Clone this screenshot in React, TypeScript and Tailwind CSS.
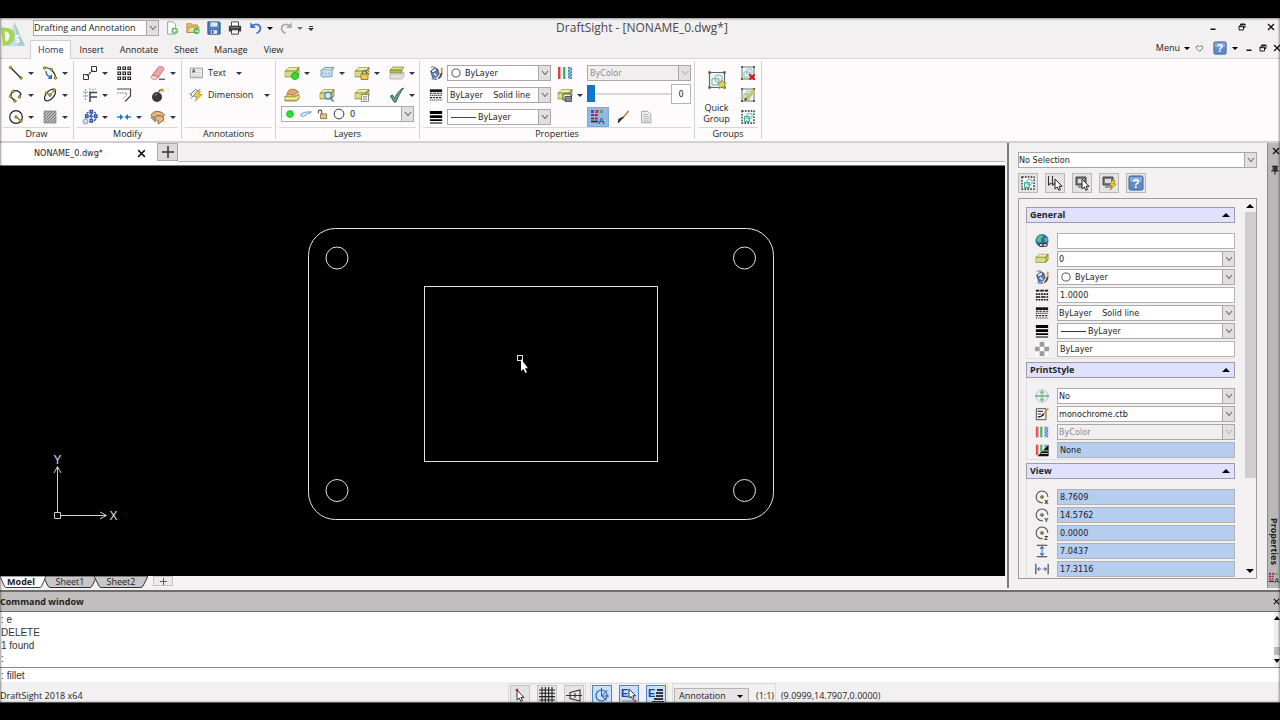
import type { ReactNode } from 'react';

const OPEN = "font-['Open_Sans',sans-serif]";
const FIELD = "font-['DejaVu_Sans_Condensed','DejaVu_Sans',sans-serif]";

const layerStack = (
  <g>
    <path d="M1 6 5 2.5h10L12 6z" fill="#eef09a" stroke="#7d7f3a" strokeWidth=".6" />
    <path d="M1 6h11v6H1z" fill="#c9cc62" stroke="#7d7f3a" strokeWidth=".6" />
    <path d="M12 6l3-3.5V9l-3 3z" fill="#98993f" stroke="#6d6f30" strokeWidth=".6" />
    <path d="M1 8h11l3-3M1 10h11l3-3" fill="none" stroke="#f3f4b8" strokeWidth=".8" />
  </g>
);
const node = (x: number, y: number) => (
  <circle cx={x} cy={y} r="1.3" fill="#d6cf3c" stroke="#55501c" strokeWidth=".7" />
);
const colorBars = (
  <g>
    <path d="M1 2h3v12H1z" fill="#d8434a" />
    <path d="M3 2h1.3v12H3z" fill="#f3a7a2" />
    <path d="M6 2h3v12H6z" fill="#36b667" />
    <path d="M8 2h1.2v12H8z" fill="#aee5bd" />
    <path d="M11 2h4v12h-4z" fill="#4b7fca" />
    <path d="M11 5l4-3M11 8l4-3M11 11l4-3M11 14l4-3" stroke="#d5e4f8" strokeWidth="1" />
  </g>
);
const groupBox = (
  <g>
    <path d="M2 2h12v12H2z" fill="#f1f6f3" stroke="#666" strokeWidth=".9" />
    <circle cx="9.200" cy="6.800" r="3" fill="#e4f1ff" stroke="#7eabd8" strokeWidth=".8" />
    <path d="M4 7h5.500v5H4z" fill="none" stroke="#67b592" strokeWidth=".8" />
    <path d="M1 1h2v2H1zM13 1h2v2h-2zM1 13h2v2H1zM13 13h2v2h-2z" fill="#5c6140" />
  </g>
);
const dashedGroup = (
  <g>
    <path d="M2 2h12v12H2z" fill="#eefaf6" stroke="#222" strokeWidth="1.3" strokeDasharray="1.6 1.3" />
    <path d="M4.5 7.5h5v5h-5z" fill="#bdebd9" stroke="#3cae8a" />
    <circle cx="9.5" cy="7" r="2.8" fill="none" stroke="#5aa9c8" strokeWidth=".9" />
  </g>
);
const paint = (
  <g>
    <path d="M2 6 10 3.500l1.500 5L9 12.500l-5 .5z" fill="#5f86c0" stroke="#2b3f66" strokeWidth=".9" />
    <ellipse cx="5.800" cy="5.200" rx="3.600" ry="2" transform="rotate(-28 5.800 5.200)" fill="#dbe6f4" stroke="#26365a" strokeWidth=".9" />
    <path d="M2 2c2-1.500 5-1.500 7 2" fill="none" stroke="#26365a" strokeWidth=".8" />
    <path d="m5.500 8 3 3.500" stroke="#dbe6f4" strokeWidth="1.600" />
    <path d="M14.500 2v6.500" stroke="#d49a45" strokeWidth="2" />
    <path d="M13.500 8h2l-1 3.500c-1 2.500-3 3.500-5 3.500 2-2 2.500-4 4-7z" fill="#5d4420" />
    <path d="M3 14.300c2 .8 4 .8 6 .3" stroke="#3a63ab" strokeWidth="1.500" fill="none" />
  </g>
);
const monitor = (
  <g>
    <path d="M2 2h10v8H2z" fill="#7b7b7b" stroke="#333" strokeWidth=".9" />
    <path d="M4 4h6v4H4z" fill="#d7dfe7" />
    <path d="M4 11h6v2H4z" fill="#999" />
  </g>
);
const arrowCursor = <path d="M8 4v10l2.3-2 1.5 3.3 1.7-.8L12 11.300h3z" fill="#fff" stroke="#222" strokeWidth="1" />;
const viewRing = (
  <g>
    <path d="M9 14.500A6.700 6.700 0 1 1 14.700 8" fill="none" stroke="#555" strokeWidth="1.300" />
    <circle cx="8" cy="8" r="1.700" fill="#8a9140" stroke="#444a22" strokeWidth=".6" />
  </g>
);
const letter = (t: string) => (
  <text x="10.500" y="15.500" fontSize="7" fontWeight="700" fontFamily="Liberation Sans, sans-serif" fill="#111">{t}</text>
);

const glyphs: Record<string, ReactNode> = {
  line: <g><path d="M2.500 2.500 13 13" stroke="#222" strokeWidth="1.200" />{node(2.5, 2.5)}{node(13, 13)}</g>,
  arc: <g><path d="M2 3c6-1.500 11 4 12 10" fill="none" stroke="#222" strokeWidth="1.200" /><path d="M4 6c0 3 1 5 4 5.500" fill="none" stroke="#2f6fc4" strokeWidth="1.500" /><path d="M10 9v5H5.500z" fill="#2f6fc4" />{node(2.5, 3)}{node(9.5, 4.500)}{node(13.5, 13)}</g>,
  polyline: <g><path d="M7 14 2.500 9.500C3 4 9 1 13 7L11 10" fill="none" stroke="#222" strokeWidth="1.200" />{node(7, 14)}{node(2.5, 9.500)}{node(11.5, 10)}{node(5, 4.500)}</g>,
  ellipse: <g><ellipse cx="8" cy="8" rx="7" ry="3.800" transform="rotate(-48 8 8)" fill="none" stroke="#222" strokeWidth="1.200" /><path d="m8 8 4.500-5M8 8 4.500 6" stroke="#444" strokeWidth=".8" />{node(8, 8)}{node(4.500, 6)}{node(12.500, 3)}</g>,
  circle: <g><circle cx="8" cy="8" r="6.300" fill="none" stroke="#222" strokeWidth="1.200" /><path d="m8 8 5 4" stroke="#222" />{node(8, 8)}{node(13, 12)}</g>,
  hatch: <g><path d="M2 2h12v12H2z" fill="#b9b9b9" stroke="#888" strokeWidth=".8" /><path d="M2 5l3-3M2 8l6-6M2 11l9-9M2 14 14 2M5 14l9-9M8 14l6-6M11 14l3-3" stroke="#666" strokeWidth=".8" /></g>,
  move: <g><path d="M1.500 9.500h5v5h-5zM9.500 1.500h5v5h-5z" fill="#fff" stroke="#333" /><path d="m5 11 6-6" stroke="#2c46b8" strokeWidth="1.500" strokeDasharray="2.200 .8" /></g>,
  pattern: <path d="M2 2h2.500v2.500H2zM7 2h2.500v2.500H7zM12 2h2.500v2.500H12zM2 7h2.500v2.500H2zM7 7h2.500v2.500H7zM12 7h2.500v2.500H12zM2 12h2.500v2.500H2zM7 12h2.500v2.500H7zM12 12h2.500v2.500H12z" fill="#fff" stroke="#222" strokeWidth="1.200" />,
  eraser: <g><path d="M2.500 10 8.500 2c1-1 6 0 5.500 2L8.500 12z" fill="#f2a7a7" stroke="#b66a6c" strokeWidth=".8" /><path d="m2.500 10 6 2-1.500 2c-1.500 1-6 0-6-1.500z" fill="#f9d9d5" stroke="#b66a6c" strokeWidth=".8" /><path d="M9 14.300h6" stroke="#666" strokeWidth="1.500" /></g>,
  trim: <g><path d="M1 5h6M1 9h5M3.500 2v12M8 1v4M10 3l4-1" stroke="#6b9edb" strokeDasharray="2 1" /><path d="M8 15V5.500h7M8 10h7" fill="none" stroke="#444" strokeWidth="1.500" /></g>,
  offset: <g><path d="M1 2h13.500v7L9 14.500" fill="none" stroke="#444" strokeWidth="1.200" /><path d="M1 6h9.500v2l-4 4" fill="none" stroke="#777" strokeDasharray="1.500 1" /></g>,
  explode: <g><circle cx="7" cy="10" r="5" fill="#393939" /><path d="M5 8.500a2 2 0 0 1 2-1.500" stroke="#aaa" fill="none" /><path d="M9 5c0-2 2-2.500 3-2" stroke="#444" strokeWidth="1.200" fill="none" /><path d="m12 .5.8 1.700 2 .3-1.500 1.200.3 1.800L12 4.500l-1.500.5.500-1.500z" fill="#f09a2a" /></g>,
  copyRing: <g><path d="M8 1.500h2.500V4H8zM3.500 6H6v2.500H3.500zM12.500 6H15v2.500h-2.500zM8 10.500h2.500V13H8z" fill="#fff" stroke="#2b4c9b" strokeWidth="1.300" /><path d="M9.200 5v4.500M7 7.300h4.500" stroke="#2f6fc4" strokeWidth="1.600" /><path d="M4.500 4.500 6.500 3M12 3l2 1.500M12 12l2-2" stroke="#2b4c9b" strokeWidth="1.200" /><circle cx="3.500" cy="12.500" r="2.500" fill="#d9dde4" stroke="#8d97aa" /></g>,
  split: <path d="M1 7.300h3V5l3.500 3L4 11V8.800H1zM15 7.300h-3V5L8.500 8l3.500 3V8.800h3z" fill="#2b78c9" />,
  edit: <g><path d="M1 6.500C3 1 11 1 14.500 6L12 9l-7 .5z" fill="#dcb485" stroke="#75532a" strokeWidth=".8" /><path d="M5 8c2-2 6-1.500 8 0l1 3-3 2-3 2 .5-3-3.500-1.500z" fill="#e9b878" stroke="#75532a" strokeWidth=".8" /><path d="m1 8 5 5" stroke="#777" strokeWidth="1.300" /></g>,
  note: <g><path d="M1.500 2.500h14v11h-14z" fill="#f3f4f5" stroke="#8a8d90" /><path d="M9 5h5M9 7.500h5M3 10h11M3 12h11" stroke="#bbb" strokeWidth=".8" /><text x="3" y="8" fontSize="6" fontWeight="700" fontFamily="Liberation Sans" fill="#222">A</text></g>,
  dimension: <g><path d="M1 8 8 1M2 12 13 1M1 6l3 4M7 1l3 3" stroke="#4a7bc4" strokeWidth="1.100" /><path d="m9 3 4 1-2 3 4 .5L7 15l2-5-4-.5z" fill="#f2cf3a" stroke="#8d7417" strokeWidth=".7" /></g>,
  stack: layerStack,
  layerOn: <g>{layerStack}<circle cx="11" cy="11" r="3.600" fill="#2fe030" stroke="#189a20" strokeWidth=".7" /></g>,
  layerFreeze: <g><path d="M2 5l4-2.500h9L13 6v6l-2-1-2 1.500-2-1.500-2 1.500L2 11z" fill="#c9e4f6" stroke="#5e93c4" strokeWidth=".9" /><path d="M4 7v3M7 7.500v2.500M10 7v3" stroke="#8fbce0" strokeWidth="1.200" /><path d="M2 5h10l3-2" stroke="#a9b872" strokeWidth="1.200" fill="none" /></g>,
  layerLock: <g>{layerStack}<path d="M8.500 9V7.500a2 2 0 0 1 4 0V9" fill="none" stroke="#666" strokeWidth="1.200" /><path d="M7 9h7v5.500H7z" fill="#f2c64b" stroke="#8c6a16" strokeWidth=".8" /></g>,
  layerSheet: <g><path d="M1 5 4 2h11l-2 3z" fill="#dfe28a" stroke="#7d7f3a" strokeWidth=".7" /><path d="M1 5h12v3H1z" fill="#b7ba51" stroke="#7d7f3a" strokeWidth=".7" /><path d="M1 9h12l2-2v4l-2 3H1z" fill="#e1e1e1" stroke="#a7a7a7" strokeWidth=".7" /></g>,
  layerHand: <g><path d="M1 9h10l4-2v5l-3 2H1z" fill="#d3cf6c" stroke="#7d7436" strokeWidth=".8" /><path d="M3 7c1-4 4-6 9-4l2.500 2-5 3-4-1-2 1z" fill="#e9a46a" stroke="#9c5a2c" strokeWidth=".8" /><path d="M1 11.500h11l3-2" stroke="#fff6b0" fill="none" /></g>,
  layerFind: <g>{layerStack}<circle cx="9" cy="8.500" r="3.300" fill="#cfe6fa" stroke="#4f7fae" strokeWidth="1.200" /><path d="m11.500 11 3 3.500" stroke="#4f7fae" strokeWidth="1.800" /></g>,
  layerPage: <g>{layerStack}<path d="M7.500 7.500h7v7h-7z" fill="#f5f5f5" stroke="#777" strokeWidth=".8" /><path d="M9 9.500h4M9 11h4M9 12.500h4" stroke="#888" strokeWidth=".7" /></g>,
  check: <path d="m1.500 9 2-1 2 3.500C8 6 11 2.500 14.500 1 11.500 5 9 9.500 7 15H5z" fill="#6fa98a" stroke="#27503d" strokeWidth=".9" />,
  paint,
  linestyle: <g><path d="M1 1.500h14v3H1z" fill="#111" /><path d="M1 6h14" stroke="#222" strokeWidth="1.400" strokeDasharray="3 1" /><path d="M1 8.500h14M1 13.700h14" stroke="#222" strokeWidth="1.400" strokeDasharray="1.200 1" /><path d="M1 11h14" stroke="#222" strokeWidth="1.400" strokeDasharray="2.500 1" /></g>,
  dashes: <g><path d="M1 3h14" stroke="#111" strokeWidth="2" strokeDasharray="4 1" /><path d="M1 7h14M1 13.500h14" stroke="#111" strokeWidth="1.800" strokeDasharray="2 1" /><path d="M1 10.300h14" stroke="#111" strokeWidth="1.800" strokeDasharray="5 1" /></g>,
  weight: <path d="M1 1h14v3.500H1zM1 6h14v3H1zM1 10.500h14v2.200H1zM1 14.200h14v1.200H1z" fill="#000" />,
  checker: <g><path d="M0 0h16v16H0z" fill="#fafafa" /><path d="M5.300 0h5.400v5.300H5.300zM0 5.300h5.300v5.400H0zM10.700 5.300H16v5.400h-5.300zM5.300 10.700h5.400V16H5.300z" fill="#9b9b9b" /></g>,
  bars: colorBars,
  layerPrint: <g>{layerStack}<path d="M6 7h8v6H6z" fill="#eee" stroke="#444" strokeWidth=".9" /><path d="M8 9.500h6.500v5H8z" fill="#888" stroke="#333" strokeWidth=".7" /></g>,
  brush: <g><path d="M14.500 1 7.500 9.500" stroke="#b88b4b" strokeWidth="1.800" /><path d="m8.500 8-6 6.500 1-4z" fill="#3a2d1c" stroke="#3a2d1c" strokeWidth="1.200" /></g>,
  page: <g><path d="M3 1.500h7l3.500 3.500v9.500H3z" fill="#f2f2f2" stroke="#999" /><path d="M5 5h5M5 7.500h6.500M5 10h6.500M5 12.500h6.500" stroke="#a5a5a5" /></g>,
  match: <g><path d="M1 1h3v3H1z" fill="#5548c8" /><path d="M5.500 1h3v3h-3z" fill="#d02b3b" /><path d="M10 1h3v3h-3z" fill="#4dae57" /><path d="M1 6h7M1 9.500h7" stroke="#a3273d" strokeWidth="1.800" strokeDasharray="3 .7" /><path d="M1 12.500h7" stroke="#333" strokeWidth="1.800" /><text x="8.500" y="15" fontSize="9" fontFamily="Liberation Sans" fill="#111">A</text></g>,
  quickGroup: <g>{groupBox}<path d="m12 8 1 2.200 2.500.3-1.800 1.700.5 2.500-2.200-1.300L9.800 15l.4-2.600-1.700-1.700 2.400-.4z" fill="#e6d54a" stroke="#85812d" strokeWidth=".5" /></g>,
  ungroup: <g>{groupBox}<path d="m9.500 9.500 5 5M14.500 9.500l-5 5" stroke="#cf1624" strokeWidth="2" /></g>,
  editGroup: <g>{groupBox}<path d="M14 3 6 11.500" stroke="#d9c63a" strokeWidth="2.600" /><path d="m5.500 10.500-1.500 3.500 3.500-1.500z" fill="#444" /></g>,
  dashedGroup,
  selectAll: <g><path d="M1.500 1v9l3-2M5.500 1v9l3-2" fill="none" stroke="#333" strokeWidth="1.100" />{arrowCursor}</g>,
  selectPc: <g>{monitor}{arrowCursor}</g>,
  flashPc: <g>{monitor}<path d="m11 5 3 .5-1.500 3 2.500.5-5.500 6 1.300-4.500H8.500z" fill="#f0c92c" stroke="#86681a" strokeWidth=".6" /></g>,
  help: <g><rect x="1" y="1" width="14" height="14" rx="1.500" fill="#5f8cc8" stroke="#38629c" /><path d="M2 2h12v5H2z" fill="#86abdc" /><text x="8" y="12.500" textAnchor="middle" fontSize="12" fontWeight="700" fontFamily="Liberation Sans" fill="#fff">?</text></g>,
  globe: <g><circle cx="8" cy="7.500" r="7" fill="#2f6fae" stroke="#214d80" strokeWidth=".7" /><path d="M2.500 4c2-3 6-3 7-1.500L6.500 6l1 3L3 9C1.500 7 2 5 2.500 4zM10.500 5l3.500-.5.500 3.500-3 1z" fill="#5cc08b" /><rect x="4.500" y="11" width="5" height="3" rx="1.500" fill="#eee" stroke="#222" strokeWidth="1.100" /><rect x="9" y="11" width="5" height="3" rx="1.500" fill="#eee" stroke="#222" strokeWidth="1.100" /></g>,
  printYes: <g><circle cx="8" cy="8" r="7" fill="#dff2f4" stroke="#9fbfd0" /><path d="M0 8h16" stroke="#6a8c90" strokeWidth="1.400" /><path d="M8 2v12M6 4.500 8 2.500l2 2M6 11.500l2 2 2-2" fill="none" stroke="#79c26a" strokeWidth="1.500" /></g>,
  styleTable: <g><path d="M1.500 2h11v12.500h-11z" fill="#fff" stroke="#333" /><path d="M3 5h6M3 8h4M3 11h3" stroke="#333" strokeWidth="1.300" /><path d="M15.300 1.500 9 8.500" stroke="#c89b54" strokeWidth="1.900" /><path d="m9.500 7-6 6.500 7-4z" fill="#222" /></g>,
  styleDark: <g>{colorBars}<path d="M15.500 2v13H3z" fill="#111" /><path d="M9 9h6M7 12h8" stroke="#fff" strokeWidth=".8" /></g>,
  viewX: <g>{viewRing}{letter('X')}</g>,
  viewY: <g>{viewRing}{letter('Y')}</g>,
  viewZ: <g>{viewRing}{letter('Z')}</g>,
  height: <g><path d="M2 1.500h12M2 14.500h12" stroke="#333" strokeWidth="1.200" /><path d="M8 3v10M5.800 5.500 8 3l2.200 2.500M5.800 10.500 8 13l2.200-2.500" fill="none" stroke="#3d6fc0" strokeWidth="1.200" /></g>,
  width: <g><path d="M1 2v12M15 2v12" stroke="#333" strokeWidth="1.200" /><path d="M3 8h4M9 8h4M5 6 3 8l2 2M11 6l2 2-2 2" fill="none" stroke="#3d6fc0" strokeWidth="1.200" /></g>,
  newFile: <g><path d="M3 1h6l3 3v11H3z" fill="#fff" stroke="#8f9398" /><circle cx="11" cy="11" r="4" fill="#3fb950" stroke="#fff" strokeWidth=".6" /><path d="M11 8.500v5M8.500 11h5" stroke="#fff" strokeWidth="1.300" /></g>,
  openFile: <g><path d="M1 3h5l1 1.500h6V13H1z" fill="#e2bd62" stroke="#9c7a2c" strokeWidth=".8" /><path d="m1 13 3-6h11l-3 6z" fill="#f4dc93" stroke="#9c7a2c" strokeWidth=".8" /><circle cx="12" cy="11.500" r="3.500" fill="#3fb950" /><path d="M10 11.500h4M12.500 10l1.500 1.500-1.500 1.500" stroke="#fff" fill="none" /></g>,
  save: <g><path d="M1 1h13l1 1v13H1z" fill="#4a7fc0" stroke="#24497c" /><path d="M4 1.500h8v5H4z" fill="#dbe8f6" /><path d="M4 10h8v5H4z" fill="#e9edf2" stroke="#24497c" strokeWidth=".6" /><path d="M5.500 11h2v3h-2z" fill="#24497c" /></g>,
  print: <g><path d="M4 1h8v5H4z" fill="#fff" stroke="#333" /><path d="M1 5.500h14V12H1z" fill="#3d3d3d" /><path d="M3 7.500h10" stroke="#888" /><path d="M4 10h8v5H4z" fill="#f3f3f3" stroke="#333" /></g>,
  undo: <g><path d="M4 5.500c4-3 9-1.500 9 3 0 3-2 4.500-4.500 5.500" fill="none" stroke="#3c74c4" strokeWidth="2" /><path d="M1.500 1.500v6.500H8z" fill="#3c74c4" /></g>,
  redo: <g><path d="M12 5.500c-4-3-9-1.500-9 3 0 3 2 4.500 4.500 5.500" fill="none" stroke="#a9a9a9" strokeWidth="2" /><path d="M14.500 1.500v6.500H8z" fill="#a9a9a9" /></g>,
  snap: <g><path d="M1 4h14M1 9h14M1 14h14M5 1v14M12 1v14" stroke="#ddd" strokeWidth=".8" /><circle cx="5" cy="3" r="1.500" fill="#d6323e" /><path d="M5 3v10l2.300-2 1.500 3.500 1.700-.8L9 10.500h3z" fill="#fff" stroke="#333" /></g>,
  grid: <path d="M0 3h16M0 6.300h16M0 9.600h16M0 13h16M3 0v16M6.300 0v16M9.600 0v16M13 0v16" stroke="#222" strokeWidth="1.100" />,
  ortho: <path d="M4 5.500 14 3v11L4 11.500zM0 8.500h16M9 6v5" fill="none" stroke="#333" strokeWidth="1.100" />,
  polar: <g><circle cx="7.500" cy="8.500" r="5.500" fill="none" stroke="#2b5ea8" strokeWidth="1.200" /><path d="M7.500 1v8H15M7.500 9l6-6M7.500 9l5 4" fill="none" stroke="#2b5ea8" /></g>,
  esnap: <g><text x="0" y="9.500" fontSize="11" fontWeight="700" fontFamily="Liberation Sans" fill="#1d3fae">E</text><path d="M8 2v9l2-1.700 1.500 3 1.500-.7-1.300-2.800h3z" fill="#fff" stroke="#222" strokeWidth=".9" /><path d="M1 14h11" stroke="#888" /><circle cx="14" cy="14" r="1.500" fill="#d6323e" /></g>,
  etrack: <g><text x="0" y="9.500" fontSize="11" fontWeight="700" fontFamily="Liberation Sans" fill="#1d3fae">E</text><path d="M9 3h6M8 6h7M8 9h7M6 12h9M4 15h12" stroke="#333" strokeWidth="2" /></g>,
  heart: <path d="M8 13 2.500 7.500C1 5 4 2 6.500 4L8 5.500 9.500 4C12 2 15 5 13.500 7.500z" fill="#fff" stroke="#555" strokeWidth="1.500" />,
  bulb: <circle cx="8" cy="8" r="5.500" fill="#2fe030" stroke="#1b9a24" />,
  frost: <path d="M1 10c1-4 6-5 14-5-1 3-4 2-6 3-2 3-7 4-8 2z" fill="#e4f0fa" stroke="#7aa6cf" strokeWidth="1.400" />,
  padlock: <g><path d="M2 6V3.500c0-2.500 5-2.500 5 0V7" fill="none" stroke="#444" strokeWidth="1.500" /><path d="M5 7h9v7H5z" fill="#e8c373" stroke="#6d5320" /></g>,
  swatch: <circle cx="8" cy="8" r="6.500" fill="#fff" stroke="#333" strokeWidth="1.300" />,
  pin: <path d="M3 2h10M5 2v7M11 2v7M7.500 3h2v6h-2zM2 9.500h12M8 10v5" fill="none" stroke="#222" strokeWidth="1.800" />,
  minimize: <path d="M3 12.500h10" stroke="#111" strokeWidth="3" />,
  restore: <path d="M5 5V2h9v7h-3M2 6h9v8H2zM2 7.300h9M5 3h9" fill="none" stroke="#111" strokeWidth="1.900" />,
  close: <path d="m2 2 12 12M14 2 2 14" stroke="#111" strokeWidth="2.600" />,
};

function Icon({ name, size = 'size-4' }: { name: string; size?: string }) {
  return <svg viewBox="0 0 16 16" className={`${size} block shrink-0`} aria-hidden="true">{glyphs[name]}</svg>;
}

function Caret({ color = 'border-t-[#2a3550]' }: { color?: string }) {
  return <span className={`block h-0 w-0 border-x-[3px] border-t-[3px] border-x-transparent ${color}`} />;
}

function Tool({ name, label, menu, wide }: { name: string; label: string; menu?: boolean; wide?: boolean }) {
  return (
    <div className={`flex h-[22px] items-center ${wide ? 'w-[35px]' : 'w-[34px]'}`}>
      <button aria-label={label} className="flex size-5 items-center justify-center"><Icon name={name} /></button>
      {menu && <button aria-label={`${label} options`} className="flex h-5 w-[10px] items-center justify-center"><Caret /></button>}
    </div>
  );
}

function Combo({ label, value, className = '', lead, pad = 'pl-[2px]', disabled, font = FIELD }: {
  label: string; value: string; className?: string; lead?: ReactNode; pad?: string; disabled?: boolean; font?: string;
}) {
  return (
    <div className={`relative h-4 min-w-0 ${className}`}>
      <select
        aria-label={label}
        disabled={disabled}
        className={`block h-full w-full appearance-none border border-[#aaa8a9] pr-[14px] text-[9px] leading-[14px] opacity-100 ${pad} ${font} ${disabled ? 'bg-[#f0eeef] text-[#8d8b8c]' : 'bg-white text-[#222]'}`}
      >
        <option>{value}</option>
      </select>
      {lead && <span className="pointer-events-none absolute inset-y-0 left-1 flex items-center gap-[5px]">{lead}</span>}
      <span className="pointer-events-none absolute inset-y-0 right-0 flex w-[13px] items-center justify-center border border-[#a9a7a8] bg-[#e1dfe0]">
        <svg viewBox="0 0 8 6" className="h-[6px] w-2"><path d="m1 1 3 3.500L7 1" fill="none" stroke={disabled ? '#b5b3b4' : '#666'} strokeWidth="1.100" /></svg>
      </span>
    </div>
  );
}

function Group({ title, className, children }: { title: string; className: string; children: ReactNode }) {
  return (
    <section aria-label={title} className={`flex shrink-0 flex-col border-r border-[#d2d0d1] ${className}`}>
      <div className="h-[66px] pt-px">{children}</div>
      <h2 className="mx-[3px] h-3 border-t border-[#d9d7d8] text-center text-[9px] leading-[11px]">{title}</h2>
    </section>
  );
}

const quickTools = [['newFile', 'New'], ['openFile', 'Open'], ['save', 'Save'], ['print', 'Print']];

function Header() {
  return (
    <header className="flex h-[41px] shrink-0 border-b border-[#d6d4d5] bg-[#f2f0f1]">
      <div className="w-[30px] shrink-0 overflow-hidden pt-1">
        <svg viewBox="0 0 26 26" className="size-[26px]" role="img" aria-label="DraftSight">
          <path d="M14.500 0 25 24H7z" fill="#a9cdd6" />
          <path d="M14.500 0 18 24H9z" fill="#c3dde3" />
          <path d="M1 5.500C11 5 15.500 9 14.500 15c-.6 5-6 9-11.500 9z" fill="#a5d455" />
          <path d="M4.500 9.500c4 0 5.500 2 5 5.500-.4 3-2 4.500-4 4.500z" fill="#f1f7e6" />
          <path d="M19.500 14c-3.500-1.500-4.500 2-2 3s1.500 4-2 2.500" fill="none" stroke="#fff" strokeWidth="1.600" />
        </svg>
      </div>
      <div className="flex min-w-0 flex-1 flex-col">
        <div className="flex h-[21px] items-center">
          <div className="flex flex-1 items-center pl-[3px]">
            <Combo label="Workspace" value="Drafting and Annotation" className="w-[126px]" font={OPEN} pad="pl-0" />
            <div className="flex items-center pl-[2px]">
              {quickTools.map(([n, l]) => <button key={n} aria-label={l} className="flex w-[21px] justify-center"><Icon name={n} size="size-[14px]" /></button>)}
              <button aria-label="Undo" className="flex w-[22px] justify-center"><Icon name="undo" size="size-[14px]" /></button>
              <button aria-label="Undo history" className="flex w-2"><Caret color="border-t-black" /></button>
              <button aria-label="Redo" className="flex w-[22px] justify-center"><Icon name="redo" size="size-[14px]" /></button>
              <button aria-label="Redo history" className="flex w-2"><Caret color="border-t-[#777]" /></button>
              <button aria-label="Customize toolbar" className="flex w-3 flex-col items-center gap-px"><span className="h-px w-1 bg-[#333]" /><Caret /></button>
            </div>
          </div>
          <h1 className="text-[12px] leading-[18px] text-[#4a4849]">DraftSight - [NONAME_0.dwg*]</h1>
          <div className="ml-6 flex flex-1 justify-end gap-[21px] pr-[5px] pb-[3px]">
            <button aria-label="Minimize"><Icon name="minimize" size="size-2" /></button>
            <button aria-label="Restore"><Icon name="restore" size="size-2" /></button>
            <button aria-label="Close"><Icon name="close" size="size-2" /></button>
          </div>
        </div>
        <div className="flex h-5 items-end justify-between">
          <nav className="-mb-px flex text-[9px] leading-[18px]">
            <a href="#home" aria-current="page" className="h-[19px] border border-b-0 border-[#cfcdce] bg-[#fdfbfc] px-[7px] text-[#1f3864]">Home</a>
            {['Insert', 'Annotate', 'Sheet', 'Manage', 'View'].map((t) => (
              <a key={t} href={`#${t.toLowerCase()}`} className="h-[19px] px-2 pt-px">{t}</a>
            ))}
          </nav>
          <div className="flex h-5 items-center text-[9px]">
            <button className="flex items-center gap-1 pr-[5px]">Menu<Caret color="border-t-black" /></button>
            <button aria-label="Favourites" className="pr-[9px]"><Icon name="heart" size="size-[9px]" /></button>
            <button aria-label="Help" className="pr-[5px]"><Icon name="help" size="size-[14px]" /></button>
            <button aria-label="Help options" className="pr-[7px]"><Caret color="border-t-black" /></button>
            <button aria-label="Minimize document" className="pr-[6px]"><Icon name="minimize" size="size-2" /></button>
            <button aria-label="Restore document" className="pr-[6px]"><Icon name="restore" size="size-2" /></button>
            <button aria-label="Close document" className="-mr-px"><Icon name="close" size="size-2" /></button>
          </div>
        </div>
      </div>
    </header>
  );
}

function Ribbon() {
  return (
    <div className="flex h-[84px] shrink-0 overflow-hidden border-b-2 border-[#d2d0d1] bg-[#fdfbfc] pt-[2px] pb-[2px] text-[#222]">
      <Group title="Draw" className="w-[74px]">
        <div className="grid grid-cols-[34px_34px] pl-[6px]">
          <Tool name="line" label="Line" menu /><Tool name="arc" label="Arc" menu />
          <Tool name="polyline" label="Polyline" menu /><Tool name="ellipse" label="Ellipse" menu />
          <Tool name="circle" label="Circle" menu /><Tool name="hatch" label="Hatch" menu />
        </div>
      </Group>
      <Group title="Modify" className="w-[108px]">
        <div className="grid grid-cols-[34px_34px_34px] pl-[6px]">
          <Tool name="move" label="Move" menu /><Tool name="pattern" label="Pattern" /><Tool name="eraser" label="Delete" menu />
          <Tool name="trim" label="Trim" menu /><Tool name="offset" label="Offset" /><Tool name="explode" label="Explode" />
          <Tool name="copyRing" label="Copy" menu /><Tool name="split" label="Split" menu /><Tool name="edit" label="Edit" menu />
        </div>
      </Group>
      <Group title="Annotations" className="w-[94px]">
        <div className="flex h-[22px] items-center pl-[7px] text-[9px]">
          <button className="flex items-center gap-[5px]"><Icon name="note" size="size-[14px]" />Text</button>
          <button aria-label="Text options" className="ml-[10px]"><Caret /></button>
        </div>
        <div className="flex h-[22px] items-center justify-between pr-[5px] pl-[7px] text-[9px]">
          <button className="flex items-center gap-[5px]"><Icon name="dimension" size="size-[14px]" />Dimension</button>
          <button aria-label="Dimension options"><Caret /></button>
        </div>
      </Group>
      <Group title="Layers" className="w-[144px]">
        <div className="grid grid-cols-[35px_35px_35px_35px] pl-[6px]">
          <Tool wide name="layerOn" label="Show layer" menu /><Tool wide name="layerFreeze" label="Freeze layer" menu /><Tool wide name="layerLock" label="Lock layer" menu /><Tool wide name="layerSheet" label="Isolate layer" menu />
          <Tool wide name="layerHand" label="Activate layer" /><Tool wide name="layerFind" label="Preview layer" /><Tool wide name="layerPage" label="Layer states" /><Tool wide name="check" label="Apply layer" menu />
        </div>
        <Combo label="Active layer" value="0" className="mr-[5px] ml-[5px]" pad="pl-[68px]" lead={<><Icon name="bulb" size="size-[10px]" /><Icon name="frost" size="size-3" /><Icon name="padlock" size="size-[11px]" /><Icon name="swatch" size="size-3" /></>} />
      </Group>
      <Group title="Properties" className="w-[275px]">
        <div className="flex">
          <div className="flex w-[27px] flex-col items-center pl-1">
            {['paint', 'linestyle', 'weight'].map((n) => <span key={n} className="flex h-[22px] items-center"><Icon name={n} size="size-[14px]" /></span>)}
          </div>
          <div className="flex w-[104px] flex-col gap-[6px] pt-[3px]">
            <Combo label="Line colour" value="ByLayer" pad="pl-[17px]" lead={<Icon name="swatch" size="size-[10px]" />} />
            <Combo label="Line style" value={'ByLayer\u00a0\u00a0\u00a0\u00a0Solid line'} />
            <Combo label="Line weight" value="ByLayer" pad="pl-[30px]" lead={<span className="h-px w-[25px] bg-[#444]" />} />
          </div>
          <div className="flex w-9 flex-col pl-1">
            <Tool name="bars" label="Print colour" />
            <Tool name="layerPrint" label="Print style" menu />
          </div>
          <div className="w-[104px] pt-[3px]">
            <Combo label="Print style colour" value="ByColor" disabled />
            <div className="flex h-[26px] items-center">
              <input type="range" aria-label="Transparency" defaultValue={0} className="h-[18px] min-w-0 flex-1 appearance-none bg-transparent [&::-webkit-slider-runnable-track]:h-[2px] [&::-webkit-slider-runnable-track]:bg-[#d8d6d7] [&::-webkit-slider-thumb]:-mt-2 [&::-webkit-slider-thumb]:h-[17px] [&::-webkit-slider-thumb]:w-2 [&::-webkit-slider-thumb]:appearance-none [&::-webkit-slider-thumb]:bg-[#0f76c8]" />
              <input aria-label="Transparency value" defaultValue="0" className={`h-5 w-5 border border-[#b5b3b4] bg-white text-center text-[9px] ${FIELD}`} />
            </div>
            <div className="flex h-5 items-center gap-[5px]">
              <button aria-label="Match properties" aria-pressed="true" className="flex h-5 w-[22px] items-center justify-center border border-[#7fa9d8] bg-[#91b8e6]"><Icon name="match" /></button>
              <button aria-label="Property painter" className="flex w-[18px] justify-center"><Icon name="brush" size="size-[14px]" /></button>
              <button aria-label="Property list" className="flex w-[18px] justify-center"><Icon name="page" size="size-[14px]" /></button>
            </div>
          </div>
        </div>
      </Group>
      <Group title="Groups" className="w-[67px]">
        <div className="flex">
          <button className="flex w-[43px] shrink-0 flex-col items-center pt-2 text-[9px] leading-[11px]">
            <Icon name="quickGroup" size="size-5" />
            <span className="pt-3">Quick<br />Group</span>
          </button>
          <div className="w-5 overflow-hidden"><Tool name="ungroup" label="Ungroup" /><Tool name="editGroup" label="Edit group" /><Tool name="dashedGroup" label="Group selection" /></div>
        </div>
      </Group>
    </div>
  );
}

const holes = [[337, 92], [744.5, 92], [337, 324.5], [744.5, 324.5]];

function Drawing() {
  return (
    <div className="min-h-0 flex-1 overflow-hidden bg-black">
      <svg className="block h-full w-full" fill="none" stroke="#e4e4e4" role="img" aria-label="Plate with four holes">
        <rect x="308.500" y="62.500" width="465" height="291" rx="27" />
        <rect x="424.500" y="120.500" width="233" height="175" />
        {holes.map(([x, y]) => <circle key={`${x}-${y}`} cx={x} cy={y} r="11" />)}
        <g stroke="#cfcfcf">
          <path d="M54.500 346.500h6v6h-6zM57.500 346v-45M54 307l3.500-6.500L61 307M61 349.500h45M100 346l6.500 3.500L100 353" />
        </g>
        <g stroke="none" fill="#dedede" fontFamily="Liberation Sans, sans-serif" fontSize="12">
          <text x="57.500" y="298" textAnchor="middle">Y</text>
          <text x="113.500" y="354" textAnchor="middle">X</text>
        </g>
        <rect x="517.500" y="189.500" width="5" height="5" />
        <path d="M521 193v12l2.500-2 2 4 1.500-.7-2-4h3z" fill="#fff" stroke="none" />
      </svg>
    </div>
  );
}

function SheetTab({ label, active }: { label: string; active?: boolean }) {
  return (
    <button className={`relative -mr-[3px] h-3 text-[9px] leading-[12px] ${active ? 'z-10 w-[46px] pr-1 font-bold' : 'w-[54px]'}`}>
      <svg viewBox="0 0 54 12" preserveAspectRatio="none" className="absolute inset-0 size-full" aria-hidden="true">
        <path d="M0 0 5 10q1 1.500 2 1.500h40q1 0 2-1.500L54 0z" fill={active ? '#fff' : '#c8c6c7'} stroke="#333" />
      </svg>
      <span className="relative">{label}</span>
    </button>
  );
}

function Workspace() {
  return (
    <main className="flex min-w-0 flex-1 flex-col">
      <div className="flex h-[23px] shrink-0 items-start border-b border-[#777] bg-white">
        <div className="flex h-[21px] w-[157px] items-center justify-between pr-[11px] pl-[34px] text-[9px]">
          <span className={FIELD}>NONAME_0.dwg*</span>
          <button aria-label="Close drawing"><Icon name="close" size="size-[9px]" /></button>
        </div>
        <button aria-label="New drawing" className="flex h-[18px] w-[21px] items-center justify-center border border-[#aaa8a9] bg-[#dddbdc]">
          <svg viewBox="0 0 14 14" className="size-[14px]"><path d="M7 1v12M1 7h12" stroke="#333" strokeWidth="1.500" /></svg>
        </button>
        <div className="h-[19px] flex-1 border-b border-[#b8b6b7] bg-[#f2f0f1]" />
      </div>
      <Drawing />
      <div className="flex h-3 shrink-0 bg-[#f4f2f3]">
        <SheetTab label="Model" active /><SheetTab label="Sheet1" /><SheetTab label="Sheet2" />
        <button aria-label="Add sheet" className="ml-2 flex h-[10px] w-5 items-center justify-center border border-[#c5c3c4] bg-[#eceaeb]">
          <svg viewBox="0 0 7 7" className="size-[7px]"><path d="M3.500 0v7M0 3.500h7" stroke="#555" /></svg>
        </button>
      </div>
    </main>
  );
}

type Row = { icon: string; label: string; value: string; kind: 'text' | 'combo' | 'locked'; pad?: string; lead?: ReactNode; disabled?: boolean };

const general: Row[] = [
  { icon: 'globe', label: 'Hyperlink', value: '', kind: 'text' },
  { icon: 'stack', label: 'Layer', value: '0', kind: 'combo', pad: 'pl-px' },
  { icon: 'paint', label: 'Line colour', value: 'ByLayer', kind: 'combo', pad: 'pl-[17px]', lead: <Icon name="swatch" size="size-[10px]" /> },
  { icon: 'dashes', label: 'Line scale', value: '1.0000', kind: 'text' },
  { icon: 'linestyle', label: 'Line style', value: 'ByLayer\u00a0\u00a0\u00a0\u00a0Solid line', kind: 'combo', pad: 'pl-px' },
  { icon: 'weight', label: 'Line weight', value: 'ByLayer', kind: 'combo', pad: 'pl-[30px]', lead: <span className="h-px w-[25px] bg-[#333]" /> },
  { icon: 'checker', label: 'Transparency', value: 'ByLayer', kind: 'text' },
];
const printStyle: Row[] = [
  { icon: 'printYes', label: 'Print', value: 'No', kind: 'combo', pad: 'pl-px' },
  { icon: 'styleTable', label: 'Print style table', value: 'monochrome.ctb', kind: 'combo', pad: 'pl-px' },
  { icon: 'bars', label: 'Print colour', value: 'ByColor', kind: 'combo', pad: 'pl-px', disabled: true },
  { icon: 'styleDark', label: 'Print table type', value: 'None', kind: 'locked' },
];
const view: Row[] = [
  { icon: 'viewX', label: 'Center X', value: '8.7609', kind: 'locked' },
  { icon: 'viewY', label: 'Center Y', value: '14.5762', kind: 'locked' },
  { icon: 'viewZ', label: 'Center Z', value: '0.0000', kind: 'locked' },
  { icon: 'height', label: 'Height', value: '7.0437', kind: 'locked' },
  { icon: 'width', label: 'Width', value: '17.3116', kind: 'locked' },
];

function PropertySection({ title, rows }: { title: string; rows: Row[] }) {
  return (
    <section className="mb-[3px]">
      <h3 className="h-4 border border-[#9d9ba5] bg-[#e0e0ff]">
        <button className="flex h-full w-full items-center justify-between pr-1 pl-[3px] text-[9px] font-bold">
          {title}
          <span className="h-0 w-0 border-x-4 border-b-4 border-x-transparent border-b-black" />
        </button>
      </h3>
      <div className="border-b border-l border-[#e0dedf] pt-[9px]">
        {rows.map((r) => (
          <div key={r.label} className="flex h-[18px] items-center">
            <span className="flex w-[30px] shrink-0 justify-center"><Icon name={r.icon} size="size-[14px]" /></span>
            {r.kind === 'combo'
              ? <Combo label={r.label} value={r.value} className="flex-1" pad={r.pad} lead={r.lead} disabled={r.disabled} />
              : <input aria-label={r.label} defaultValue={r.value} readOnly={r.kind === 'locked'} className={`h-4 min-w-0 flex-1 border border-[#b3b1b4] pl-[2px] text-[9px] ${FIELD} ${r.kind === 'locked' ? 'bg-[#b5cdee]' : 'bg-white'}`} />}
          </div>
        ))}
      </div>
    </section>
  );
}

const panelTools = [['dashedGroup', 'Select group'], ['selectAll', 'Select all'], ['selectPc', 'Select entities'], ['flashPc', 'Quick select'], ['help', 'Help']];

function PropertiesPanel() {
  return (
    <aside aria-label="Properties" className="flex w-[275px] shrink-0 bg-[#f2f0f1]">
      <div className="w-1 shrink-0 border-r-2 border-[#7b797a] bg-[#f2f0f1]" />
      <div className="flex min-w-0 flex-1 flex-col pt-[9px] pr-[10px] pb-[9px] pl-[9px]">
        <Combo label="Selection" value="No Selection" className="shrink-0" pad="pl-0" />
        <div className="flex h-[30px] shrink-0 items-center gap-[7px]">
          {panelTools.map(([n, l]) => (
            <button key={l} aria-label={l} className="flex size-5 items-center justify-center border border-[#b9b7b8] bg-[#e5e3e4]"><Icon name={n} /></button>
          ))}
        </div>
        <div className="flex min-h-0 flex-1 border border-[#9c9a9b]">
          <div className="min-w-0 flex-1 overflow-hidden pt-2 pl-[7px]">
            <PropertySection title="General" rows={general} />
            <PropertySection title="PrintStyle" rows={printStyle} />
            <PropertySection title="View" rows={view} />
          </div>
          <div className="ml-[9px] flex w-3 flex-col items-center py-[5px]">
            <span className="h-0 w-0 border-x-4 border-b-4 border-x-transparent border-b-black" />
            <span className="mt-1 h-[72%] w-[11px] bg-[#cfcdce]" />
            <span className="mt-auto h-0 w-0 border-x-4 border-t-4 border-x-transparent border-t-black" />
          </div>
        </div>
      </div>
      <div className="flex w-[13px] shrink-0 flex-col items-end overflow-hidden border-l border-[#8d8b8c] bg-[#b9b7b8]">
        <button aria-label="Close panel" className="pt-1"><Icon name="close" size="size-2" /></button>
        <button aria-label="Pin panel" className="pt-[10px]"><Icon name="pin" size="size-[10px]" /></button>
        <span className="mt-auto text-[9px] leading-[12px] font-bold [writing-mode:vertical-rl]">Properties</span>
        <span className="pt-[7px] pb-1"><Icon name="match" size="size-3" /></span>
      </div>
    </aside>
  );
}

function CommandWindow() {
  return (
    <section aria-label="Command window" className="shrink-0">
      <div className="flex h-[22px] items-center justify-between border-t-2 border-b border-[#6f6d6e] bg-[#c0bebf]">
        <h2 className="text-[9px] font-bold">Command window</h2>
        <button aria-label="Close command window"><Icon name="close" size="size-[7px]" /></button>
      </div>
      <div className="flex h-[56px] justify-between border-b border-[#8a8889] bg-white">
        <pre className="pt-px pl-px font-['Liberation_Sans',sans-serif] text-[10px] leading-[13px] text-[#333]">{': e\nDELETE\n1 found\n:'}</pre>
        <div className="flex w-[6px] flex-col items-center justify-between bg-[#f0eeef] py-1">
          <span className="h-0 w-0 border-x-[3px] border-b-4 border-x-transparent border-b-black" />
          <span className="mt-auto mb-1 h-2 w-[6px] bg-[#bbb]" />
          <span className="h-0 w-0 border-x-[3px] border-t-4 border-x-transparent border-t-black" />
        </div>
      </div>
      <label className="flex h-[14px] items-center gap-[3px] bg-white pl-px font-['Liberation_Sans',sans-serif] text-[10px] text-[#333]">
        :<input aria-label="Command" defaultValue="fillet" className="min-w-0 flex-1 bg-transparent outline-none" />
      </label>
    </section>
  );
}

function StatusButtons({ items, on }: { items: string[][]; on?: boolean }) {
  return (
    <div className="mr-1 flex h-full gap-[7px] border border-b-0 border-[#dddbdc] px-px pt-px">
      {items.map(([n, l]) => (
        <button key={n} aria-label={l} aria-pressed={!!on} className={`flex h-5 w-5 shrink-0 items-center justify-center border ${on ? 'border-[#4f84bd] bg-[#c9dff7]' : 'border-[#c4c2c3] bg-[#e6e4e5]'}`}><Icon name={n} /></button>
      ))}
    </div>
  );
}

function StatusBar() {
  return (
    <footer className="flex h-[21px] shrink-0 items-start overflow-hidden border-b border-[#777] bg-[#f2f0f1] pt-px text-[9px]">
      <span className="w-[508px] shrink-0 pt-[6px] leading-[14px]">DraftSight 2018 x64</span>
      <StatusButtons items={[['snap', 'Snap'], ['grid', 'Grid'], ['ortho', 'Ortho']]} />
      <StatusButtons on items={[['polar', 'Polar'], ['esnap', 'ESnap'], ['etrack', 'ETrack']]} />
      <div className="flex h-full border border-b-0 border-[#dddbdc] pt-1 pl-px">
        <div className="relative h-4 w-[75px]">
          <select aria-label="Annotation scale" className="h-full w-full appearance-none border border-[#b5b3b4] bg-[#e6e4e5] pl-1 leading-[14px]"><option>Annotation</option></select>
          <span className="pointer-events-none absolute inset-y-0 right-[6px] flex items-center"><Caret color="border-t-black" /></span>
        </div>
        <span className="pr-px pl-[7px] leading-[16px]">(1:1)</span>
      </div>
      <span className="pt-[5px] pl-[5px] leading-[16px]">(9.0999,14.7907,0.0000)</span>
    </footer>
  );
}

export default function App() {
  return (
    <div className={`flex h-screen flex-col overflow-hidden bg-black pt-[18px] pb-[17px] text-[#222] ${OPEN}`}>
      <div className="relative flex min-h-0 flex-1 flex-col">
        <Header />
        <Ribbon />
        <div className="flex min-h-0 flex-1">
          <Workspace />
          <PropertiesPanel />
        </div>
        <div className="h-[2px] shrink-0 bg-[#f2f0f1]" />
        <CommandWindow />
        <StatusBar />
        <div className="pointer-events-none absolute inset-0 shadow-[inset_0_0_3px_rgba(0,0,0,0.8)]" />
      </div>
    </div>
  );
}
